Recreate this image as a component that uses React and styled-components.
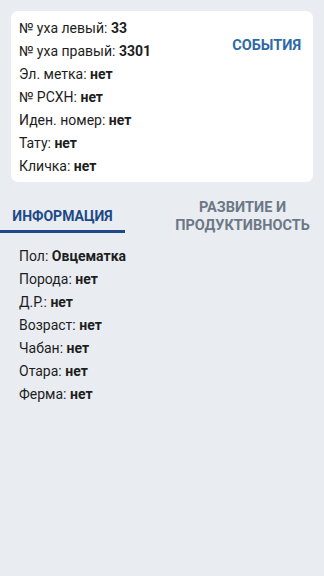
import styled, { createGlobalStyle } from "styled-components";

const GlobalStyle = createGlobalStyle`
  html, body {
    margin: 0;
    padding: 0;
    background: #e9edf2;
    font-family: Roboto, "Noto Sans", sans-serif;
  }
`;

const mainFields = [
  ["№ уха левый", "33"],
  ["№ уха правый", "3301"],
  ["Эл. метка", "нет"],
  ["№ РСХН", "нет"],
  ["Иден. номер", "нет"],
  ["Тату", "нет"],
  ["Кличка", "нет"],
];

const infoFields = [
  ["Пол", "Овцематка"],
  ["Порода", "нет"],
  ["Д.Р.", "нет"],
  ["Возраст", "нет"],
  ["Чабан", "нет"],
  ["Отара", "нет"],
  ["Ферма", "нет"],
];

const App = () => {
  return (
    <>
      <GlobalStyle />
      <Page>
        <Card>
          <List>
            {mainFields.map(([label, value]) => (
              <Row key={label}>
                {label}: <Value>{value}</Value>
              </Row>
            ))}
          </List>
          <EventsButton>СОБЫТИЯ</EventsButton>
        </Card>
        <Tabs>
          <Tab active>ИНФОРМАЦИЯ</Tab>
          <Tab wide>
            РАЗВИТИЕ И
            <br />
            ПРОДУКТИВНОСТЬ
          </Tab>
        </Tabs>
        <InfoList>
          {infoFields.map(([label, value]) => (
            <Row key={label}>
              {label}: <Value>{value}</Value>
            </Row>
          ))}
        </InfoList>
      </Page>
    </>
  );
};

const Page = styled.div`
  min-height: 576px;
  padding-top: 11px;
  box-sizing: border-box;
`;

const Card = styled.div`
  margin: 0 11px;
  background: #fff;
  border-radius: 7px;
  padding: 6px 8px 4px;
  display: flex;
  justify-content: space-between;
  align-items: flex-start;
`;

const List = styled.div`
  display: flex;
  flex-direction: column;
`;

const Row = styled.div`
  height: 23px;
  line-height: 23px;
  font-size: 14px;
  color: #1d1d1d;
`;

const Value = styled.span`
  font-weight: 700;
`;

const EventsButton = styled.button`
  border: 0;
  background: none;
  padding: 0;
  margin: 20px 4px 0 0;
  font-family: inherit;
  font-size: 14.5px;
  font-weight: 700;
  color: #2d6aa8;
  line-height: 18px;
`;

const Tabs = styled.div`
  display: flex;
  margin-top: 12px;
  height: 39px;
`;

const Tab = styled.div`
  box-sizing: border-box;
  width: ${(p) => (p.wide ? "auto" : "125px")};
  flex: ${(p) => (p.wide ? 1 : "none")};
  padding-left: ${(p) => (p.wide ? "36px" : "0")};
  padding-top: ${(p) => (p.wide ? "10px" : "7px")};
  display: flex;
  align-items: center;
  justify-content: center;
  text-align: center;
  font-size: ${(p) => (p.wide ? "14.5px" : "14px")};
  font-weight: 700;
  line-height: 18px;
  color: ${(p) => (p.active ? "#1d4a87" : "#6d7886")};
  border-bottom: 3px solid ${(p) => (p.active ? "#1d4a87" : "transparent")};
`;

const InfoList = styled.div`
  display: flex;
  flex-direction: column;
  padding: 12px 19px 0;
`;

export default App;
